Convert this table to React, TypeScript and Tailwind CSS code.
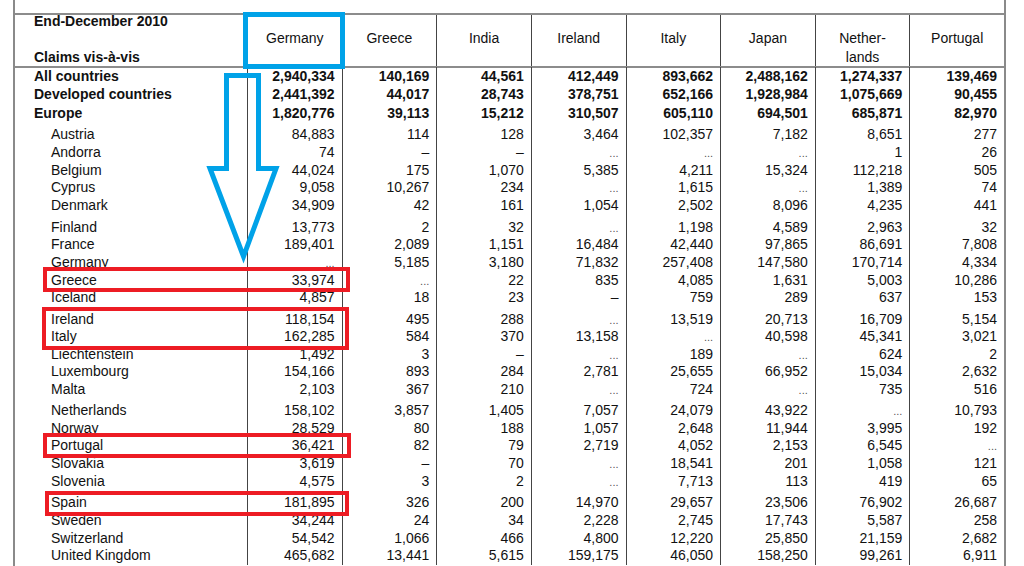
import React from "react";

type Row = { label: string; vals: string[]; bold?: boolean; pt?: string };

const cols: string[][] = [
  ["Germany"],
  ["Greece"],
  ["India"],
  ["Ireland"],
  ["Italy"],
  ["Japan"],
  ["Nether-", "lands"],
  ["Portugal"],
];

const rows: Row[] = [
  { label: "All countries", bold: true, vals: ["2,940,334", "140,169", "44,561", "412,449", "893,662", "2,488,162", "1,274,337", "139,469"] },
  { label: "Developed countries", bold: true, vals: ["2,441,392", "44,017", "28,743", "378,751", "652,166", "1,928,984", "1,075,669", "90,455"] },
  { label: "Europe", bold: true, vals: ["1,820,776", "39,113", "15,212", "310,507", "605,110", "694,501", "685,871", "82,970"] },
  { label: "Austria", pt: "pt-[4.4px]", vals: ["84,883", "114", "128", "3,464", "102,357", "7,182", "8,651", "277"] },
  { label: "Andorra", vals: ["74", "–", "–", "...", "...", "...", "1", "26"] },
  { label: "Belgium", vals: ["44,024", "175", "1,070", "5,385", "4,211", "15,324", "112,218", "505"] },
  { label: "Cyprus", vals: ["9,058", "10,267", "234", "...", "1,615", "...", "1,389", "74"] },
  { label: "Denmark", vals: ["34,909", "42", "161", "1,054", "2,502", "8,096", "4,235", "441"] },
  { label: "Finland", pt: "pt-[4.4px]", vals: ["13,773", "2", "32", "...", "1,198", "4,589", "2,963", "32"] },
  { label: "France", vals: ["189,401", "2,089", "1,151", "16,484", "42,440", "97,865", "86,691", "7,808"] },
  { label: "Germany", vals: ["...", "5,185", "3,180", "71,832", "257,408", "147,580", "170,714", "4,334"] },
  { label: "Greece", vals: ["33,974", "...", "22", "835", "4,085", "1,631", "5,003", "10,286"] },
  { label: "Iceland", vals: ["4,857", "18", "23", "–", "759", "289", "637", "153"] },
  { label: "Ireland", pt: "pt-[3.8px]", vals: ["118,154", "495", "288", "...", "13,519", "20,713", "16,709", "5,154"] },
  { label: "Italy", vals: ["162,285", "584", "370", "13,158", "...", "40,598", "45,341", "3,021"] },
  { label: "Liechtenstein", vals: ["1,492", "3", "–", "...", "189", "...", "624", "2"] },
  { label: "Luxembourg", vals: ["154,166", "893", "284", "2,781", "25,655", "66,952", "15,034", "2,632"] },
  { label: "Malta", vals: ["2,103", "367", "210", "...", "724", "...", "735", "516"] },
  { label: "Netherlands", pt: "pt-[3.7px]", vals: ["158,102", "3,857", "1,405", "7,057", "24,079", "43,922", "...", "10,793"] },
  { label: "Norway", vals: ["28,529", "80", "188", "1,057", "2,648", "11,944", "3,995", "192"] },
  { label: "Portugal", vals: ["36,421", "82", "79", "2,719", "4,052", "2,153", "6,545", "..."] },
  { label: "Slovakia", vals: ["3,619", "–", "70", "...", "18,541", "201", "1,058", "121"] },
  { label: "Slovenia", vals: ["4,575", "3", "2", "...", "7,713", "113", "419", "65"] },
  { label: "Spain", pt: "pt-[4.3px]", vals: ["181,895", "326", "200", "14,970", "29,657", "23,506", "76,902", "26,687"] },
  { label: "Sweden", vals: ["34,244", "24", "34", "2,228", "2,745", "17,743", "5,587", "258"] },
  { label: "Switzerland", vals: ["54,542", "1,066", "466", "4,800", "12,220", "25,850", "21,159", "2,682"] },
  { label: "United Kingdom", vals: ["465,682", "13,441", "5,615", "159,175", "46,050", "158,250", "99,261", "6,911"] },
];

function Val({ v }: { v: string }) {
  if (v === "...") return <span className="text-[11px] leading-[0px] text-[#555]">...</span>;
  return <>{v}</>;
}

export default function App() {
  return (
    <div className="relative w-[1024px] h-[566px] overflow-hidden bg-white text-[14px] text-[#111] font-['Liberation_Sans',Arial,sans-serif]">
      <div className="ml-[13px] w-[993px] h-[566px] border-x-2 border-[#8a8a8a] pt-[13px]">
        {/* header */}
        <div className="grid grid-cols-[232px_repeat(8,minmax(0,1fr))] h-[55px] border-y-2 border-[#8c8c8c]">
          <div className="flex flex-col justify-between pl-[19px] pb-px font-bold leading-[16px]">
            <div className="-mt-[2px]">End-December 2010</div>
            <div>Claims vis-à-vis</div>
          </div>
          {cols.map((c, i) => (
            <div key={i} className="border-l border-[#444] text-center pt-[14.3px] leading-[18.4px]">
              {c.map((l, j) => (
                <div key={j}>{l}</div>
              ))}
            </div>
          ))}
        </div>
        {/* body */}
        <div className="-mt-px">
          {rows.map((r, i) => (
            <div
              key={i}
              className={
                "grid grid-cols-[232px_repeat(8,minmax(0,1fr))] " +
                (r.bold ? "leading-[18.35px] font-bold" : "leading-[17.6px]")
              }
            >
              <div className={(r.bold ? "pl-[19px] " : "pl-[36px] ") + (r.pt ?? "")}>{r.label}</div>
              {r.vals.map((v, j) => (
                <div key={j} className={"border-l border-[#444] text-right pr-[7px] " + (r.pt ?? "")}>
                  <Val v={v} />
                </div>
              ))}
            </div>
          ))}
        </div>
      </div>

      {/* annotations */}
      <div className="absolute left-[243px] top-[12px] w-[102px] h-[56.5px] border-[5px] border-[#00A2E8]" />
      <svg className="absolute left-0 top-0 pointer-events-none" width="1024" height="566">
        <polygon
          points="226.5,75.5 258.5,75.5 258.5,168.5 276,168.5 243.5,256.5 210,168.5 226.5,168.5"
          fill="none"
          stroke="#00A2E8"
          strokeWidth="5"
          strokeLinejoin="miter"
        />
      </svg>
      <div className="absolute left-[42.5px] top-[267px] w-[307px] h-[25px] border-[4.5px] border-[#ED1C24]" />
      <div className="absolute left-[42px] top-[306.5px] w-[307px] h-[43.5px] border-[4.5px] border-[#ED1C24]" />
      <div className="absolute left-[43px] top-[432.7px] w-[307.7px] h-[25px] border-[4.5px] border-[#ED1C24]" />
      <div className="absolute left-[45px] top-[490.7px] w-[304.3px] h-[25.3px] border-[4.5px] border-[#ED1C24]" />
    </div>
  );
}
